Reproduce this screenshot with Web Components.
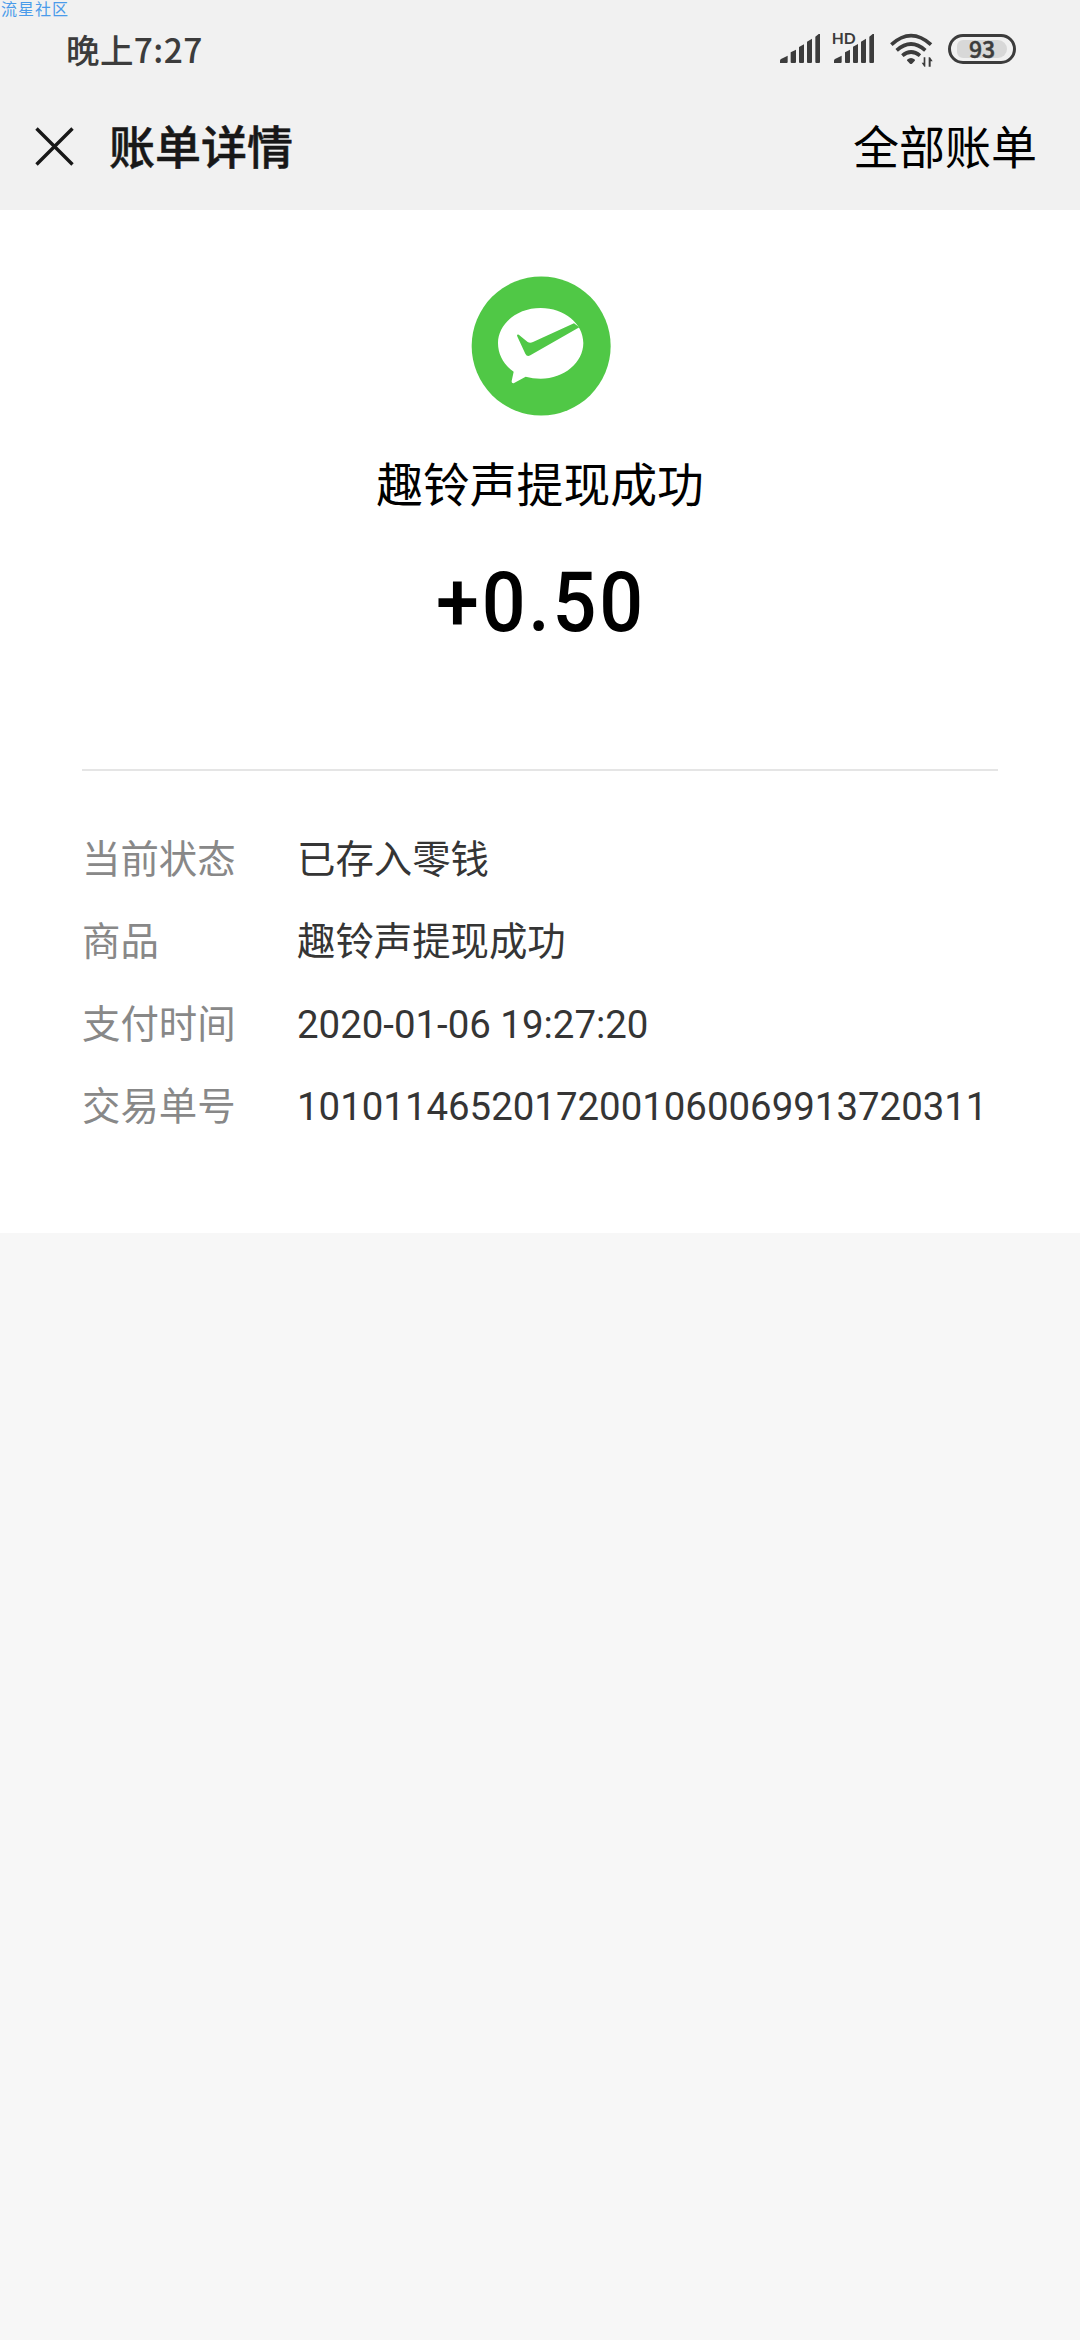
<!DOCTYPE html>
<html lang="zh-CN">
<head>
  <meta charset="UTF-8">
  <title>账单详情</title>
  <style>
    body {
      margin: 0;
      background-color: #f7f7f7;
      font-family: Roboto, "Noto Sans CJK SC", sans-serif;
    }
  </style>
</head>
<body>
<bill-page>
  <corner-mark slot="mark">流星社区</corner-mark>
  <status-bar slot="top" time="晚上7:27" battery="93"></status-bar>
  <nav-bar slot="top" title="账单详情" action="全部账单"></nav-bar>
  <bill-summary title="趣铃声提现成功" amount="+0.50"></bill-summary>
  <bill-row label="当前状态">已存入零钱</bill-row>
  <bill-row label="商品">趣铃声提现成功</bill-row>
  <bill-row label="支付时间">2020-01-06 19:27:20</bill-row>
  <bill-row label="交易单号">10101146520172001060069913720311</bill-row>
</bill-page>

<script>
  function attach(element, html) {
    const template = document.createElement('template');
    template.innerHTML = html;
    element.attachShadow({mode: 'open'});
    element.shadowRoot.appendChild(template.content.cloneNode(true));
  }

  class BillPage extends HTMLElement {
    constructor() {
      super();
      attach(this, `
        <style>
          :host {
            display: block;
            position: relative;
            height: 2340px;
          }

          header {
            height: 210px;
            background-color: #f1f1f1;
          }

          main {
            box-sizing: border-box;
            height: 1023px;
            padding: 0 82px;
            background-color: #fff;
          }
        </style>
        <header><slot name="top"></slot></header>
        <main><slot></slot></main>
        <slot name="mark"></slot>
      `);
    }
  }

  class CornerMark extends HTMLElement {
    constructor() {
      super();
      attach(this, `
        <style>
          :host {
            position: absolute;
            top: 0;
            left: 1px;
            font-family: "Noto Sans CJK SC", sans-serif;
            font-size: 16px;
            line-height: 16px;
            letter-spacing: 1px;
            color: #4a9bea;
          }
        </style>
        <slot></slot>
      `);
    }
  }

  class StatusBar extends HTMLElement {
    constructor() {
      super();
      attach(this, `
        <style>
          :host {
            display: flex;
            justify-content: space-between;
            box-sizing: border-box;
            height: 96px;
            padding: 0 64px 0 66px;
            font-family: "Noto Sans CJK SC", sans-serif;
            color: #3c3c3c;
            fill: #3c3c3c;
          }

          .time {
            margin-top: 24px;
            font-size: 33.5px;
            line-height: 50px;
            font-weight: 500;
            letter-spacing: 0.4px;
          }

          .icons {
            display: flex;
            align-items: flex-start;
            padding-top: 31px;
          }

          svg {
            display: block;
          }

          .hd {
            margin-left: 12px;
          }

          .wifi {
            margin-left: 15px;
          }

          .battery {
            display: flex;
            box-sizing: border-box;
            width: 68px;
            height: 30px;
            margin: 3px 0 0 15px;
            padding: 3px 6px;
            border: 3px solid #3c3c3c;
            border-radius: 15px;
          }

          .level {
            flex: 1;
            border-radius: 6px 9px 9px 6px;
            background-color: #d8d8d8;
            font-size: 23px;
            line-height: 16px;
            font-weight: 500;
            -webkit-text-stroke: 0.5px #3c3c3c;
            text-align: center;
          }
        </style>
        <div class="time"></div>
        <div class="icons">
          <svg width="40" height="36" viewBox="60 63 120 108">
            <path d="M60 159v-7q0-3 3-5l20-10v19q0 3-3 3zM92 159v-32l16-8v37q0 3-3 3h-10q-3 0-3-3zM117 156v-45l15-8v53q0 3-3 3h-9q-3 0-3-3zM141 156v-61l15-9v70q0 3-3 3h-9q-3 0-3-3zM166 156v-76l10-8h4v84q0 3-3 3h-8q-3 0-3-3z"/>
          </svg>
          <svg class="hd" width="43" height="36" viewBox="216 63 129 108">
            <text x="215" y="101" font-size="44" font-weight="700" textLength="72" lengthAdjust="spacingAndGlyphs" font-family="Lato">HD</text>
            <path d="M222 159v-7q0-3 3-5l20-10v19q0 3-3 3zM255 156v-29l15-8v37q0 3-3 3h-9q-3 0-3-3zM279 156v-46l15-8v54q0 3-3 3h-9q-3 0-3-3zM303 156v-61l15-9v70q0 3-3 3h-9q-3 0-3-3zM328 156v-76l10-8h4v84q0 3-3 3h-8q-3 0-3-3z"/>
          </svg>
          <svg class="wifi" width="43" height="36" viewBox="390 63 129 108">
            <g fill="none" stroke="#3c3c3c" stroke-width="11">
              <path d="M394 104Q453 50 513 104M410 121Q453 83 496 121M427 137Q453 115 480 137"/>
            </g>
            <path d="M441 149q12-10 24 0q1 2-2 5l-7 7q-3 2-6 0l-7-7q-3-3-2-5z"/>
            <path d="M485 158h6v-16h5v28h-3zM518 154h-6v16h-6v-28h4z"/>
          </svg>
          <div class="battery"><div class="level"></div></div>
        </div>
      `);
    }

    connectedCallback() {
      this.shadowRoot.querySelector('.time').textContent = this.getAttribute('time');
      this.shadowRoot.querySelector('.level').textContent = this.getAttribute('battery');
    }
  }

  class NavBar extends HTMLElement {
    constructor() {
      super();
      attach(this, `
        <style>
          :host {
            display: flex;
            align-items: center;
            box-sizing: border-box;
            height: 100px;
            padding: 0 43px 0 35px;
            font-size: 46px;
            line-height: 66px;
            color: #000;
          }

          svg {
            display: block;
          }

          .title,
          .action {
            padding-top: 3px;
          }

          .title {
            flex: 1;
            margin-left: 35px;
            font-weight: 500;
            -webkit-text-stroke: 0.5px #181818;
            color: #181818;
          }
        </style>
        <svg width="39" height="39" viewBox="0 0 39 39">
          <path d="M1.5 1.5l36 36M37.5 1.5l-36 36" stroke="#181818" stroke-width="3.4"/>
        </svg>
        <div class="title"></div>
        <div class="action"></div>
      `);
    }

    connectedCallback() {
      this.shadowRoot.querySelector('.title').textContent = this.getAttribute('title');
      this.shadowRoot.querySelector('.action').textContent = this.getAttribute('action');
    }
  }

  class BillSummary extends HTMLElement {
    constructor() {
      super();
      attach(this, `
        <style>
          :host {
            display: flex;
            flex-direction: column;
            align-items: center;
            box-sizing: border-box;
            height: 561px;
            margin-bottom: 48px;
            padding-top: 66px;
            border-bottom: 2px solid #e5e5e5;
            color: #000;
          }

          svg {
            display: block;
            margin-left: 1px;
          }

          .title {
            margin-top: 36px;
            font-size: 46.8px;
            line-height: 68px;
          }

          .amount {
            margin-top: 34px;
            padding-left: 3px;
            font-size: 84px;
            line-height: 98px;
            font-weight: 500;
            letter-spacing: 3px;
            transform: scaleX(0.92);
          }
        </style>
        <svg width="140" height="140" viewBox="92 49 420 420">
          <circle cx="302.5" cy="259" r="208.5" fill="#50c846"/>
          <path fill="#fff" d="M301 145C372 145 429 192 429 250S372 357 301 357Q277 357 256 351L220 371Q213 372 214 364L220 336C191 317 173 285 173 250C173 192 230 145 301 145z"/>
          <path fill="#50c846" d="M230 226Q233 222 239 228L262 247Q269 251 278 247L401 191L417 203L270 287Q260 293 255 282L232 233Q230 229 230 226z"/>
        </svg>
        <div class="title"></div>
        <div class="amount"></div>
      `);
    }

    connectedCallback() {
      this.shadowRoot.querySelector('.title').textContent = this.getAttribute('title');
      this.shadowRoot.querySelector('.amount').textContent = this.getAttribute('amount');
    }
  }

  class BillRow extends HTMLElement {
    constructor() {
      super();
      attach(this, `
        <style>
          :host {
            display: flex;
            height: 82.4px;
            font-size: 38.4px;
            line-height: 82.4px;
            color: #353535;
          }

          .label {
            width: 215px;
            color: #888;
          }
        </style>
        <div class="label"></div>
        <div class="value"><slot></slot></div>
      `);
    }

    connectedCallback() {
      this.shadowRoot.querySelector('.label').textContent = this.getAttribute('label');
    }
  }

  window.customElements.define('bill-page', BillPage);
  window.customElements.define('corner-mark', CornerMark);
  window.customElements.define('status-bar', StatusBar);
  window.customElements.define('nav-bar', NavBar);
  window.customElements.define('bill-summary', BillSummary);
  window.customElements.define('bill-row', BillRow);
</script>
</body>
</html>
